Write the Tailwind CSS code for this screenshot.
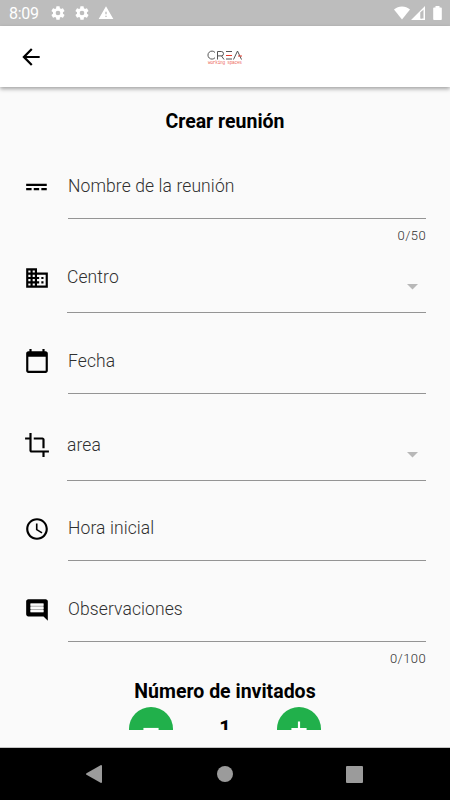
<!DOCTYPE html>
<html lang="es">
<head>
    <meta charset="UTF-8">
    <meta name="viewport" content="width=device-width, initial-scale=1.0">
    <title>Crear reunión</title>
    <script src="https://cdn.jsdelivr.net/npm/@tailwindcss/browser@4"></script>
</head>
<body class="font-[Roboto,sans-serif] bg-[#fafafa]">
    <div class="flex flex-col w-[450px] h-[800px] overflow-hidden">
        <!-- Status bar -->
        <div class="flex items-center shrink-0 h-[26px] pl-[9px] pr-2 bg-[#bdbdbd] text-white">
            <span class="w-[41px] text-[16px] leading-[26px] pt-[2px] tracking-[-0.3px]">8:09</span>
            <svg class="w-4 h-4" viewBox="0 0 24 24" fill="currentColor"><path d="M19.4 13a7.500 7.500 0 0 0 0-2l2.100-1.650a.5.5 0 0 0 .12-.64l-2-3.460a.5.5 0 0 0-.6-.22l-2.500 1a7.300 7.300 0 0 0-1.700-.98l-.38-2.650A.5.5 0 0 0 14 2h-4a.5.5 0 0 0-.5.42l-.38 2.650c-.6.25-1.170.58-1.690.98l-2.490-1a.5.5 0 0 0-.61.22l-2 3.460a.5.5 0 0 0 .12.64L4.570 11a7.500 7.500 0 0 0 0 2l-2.110 1.650a.5.5 0 0 0-.12.64l2 3.460c.12.22.39.3.61.22l2.490-1c.52.4 1.080.73 1.690.98l.38 2.650c.03.24.24.4.49.4h4c.25 0 .46-.18.49-.42l.38-2.650a7.300 7.300 0 0 0 1.690-.98l2.490 1c.23.09.49 0 .61-.22l2-3.460a.5.5 0 0 0-.12-.64zM12 15.500a3.500 3.500 0 1 1 0-7 3.500 3.500 0 0 1 0 7z"/></svg>
            <svg class="w-4 h-4 ml-2" viewBox="0 0 24 24" fill="currentColor"><path d="M19.4 13a7.500 7.500 0 0 0 0-2l2.100-1.650a.5.5 0 0 0 .12-.64l-2-3.460a.5.5 0 0 0-.6-.22l-2.500 1a7.300 7.300 0 0 0-1.700-.98l-.38-2.650A.5.5 0 0 0 14 2h-4a.5.5 0 0 0-.5.42l-.38 2.650c-.6.25-1.170.58-1.690.98l-2.490-1a.5.5 0 0 0-.61.22l-2 3.460a.5.5 0 0 0 .12.64L4.570 11a7.500 7.500 0 0 0 0 2l-2.110 1.650a.5.5 0 0 0-.12.64l2 3.460c.12.22.39.3.61.22l2.490-1c.52.4 1.080.73 1.690.98l.38 2.650c.03.24.24.4.49.4h4c.25 0 .46-.18.49-.42l.38-2.650a7.300 7.300 0 0 0 1.690-.98l2.490 1c.23.09.49 0 .61-.22l2-3.460a.5.5 0 0 0-.12-.64zM12 15.500a3.500 3.500 0 1 1 0-7 3.500 3.500 0 0 1 0 7z"/></svg>
            <svg class="w-4 h-4 ml-2" viewBox="0 0 24 24" fill="currentColor"><path d="M1 21h22L12 2 1 21zm12-3h-2v-2h2v2zm0-4h-2v-4h2v4z"/></svg>
            <svg class="w-[16px] h-[14px] ml-auto" viewBox="0 0 16 14" fill="currentColor"><path d="M8 13.500 0 3.500C2.300 1.600 5 .5 8 .5s5.700 1.100 8 3z"/></svg>
            <svg class="w-[14px] h-[14px] ml-[1px]" viewBox="0 0 14 14" fill="currentColor"><path fill-rule="evenodd" d="M0 14 14 0v14zM9.500 6.500V12.500h3V3.500z"/><path d="M9.500 6.500l1.500-1.500v7.500H9.500z" fill="#bdbdbd"/></svg>
            <svg class="w-[9px] h-[14px] ml-[8px]" viewBox="0 0 9 14" fill="currentColor"><path d="M2.500 0h4v1.500H8q.8 0 .8.8v11q0 .7-.8.7H1q-.8 0-.8-.7v-11q0-.8.8-.8h1.500z"/></svg>
        </div>

        <!-- App bar -->
        <header class="relative z-10 flex items-center shrink-0 h-[61px] bg-white shadow-[0_2px_4px_rgba(0,0,0,0.35)]">
            <svg class="w-[26px] h-[26px] ml-[18px]" viewBox="0 0 24 24"><path d="M20 11H7.830l5.590-5.590L12 4l-8 8 8 8 1.410-1.410L7.830 13H20v-2z"/></svg>
            <svg class="w-9 h-[18px] ml-[163px]" viewBox="0 0 36 18" fill="none" stroke="#555" stroke-width="1">
                <path d="M8 4.500A4 4 0 1 0 8 9.700M10.500 11.500V3.500h3.800a2.200 2.200 0 0 1 0 4.400H10.500M14.500 7.900 17 11.500M19 3.500h6M19 11h6M26.500 11.500 30.500 3l4 8.500"/>
                <path d="M19 7.500h6M31 8h4" stroke="#e53a2c"/>
                <text x="1" y="16.300" textLength="34" font-family="Liberation Mono, monospace" font-size="4.500" fill="#ee6b62" stroke="none">working spaces</text>
            </svg>
        </header>

        <!-- Form, scrolls under the bottom edge -->
        <main class="h-[643px] shrink-0 overflow-hidden pl-6 pr-6">
            <h1 class="h-[78px] pt-[21px] text-center text-[19.500px] leading-[27px] font-bold text-black">Crear reunión</h1>

            <div class="flex h-[91px]">
                <svg class="w-[26px] h-[26px] mt-[9px] mr-[18px]" viewBox="0 0 24 24"><path d="M2 9v2h19V9H2zm0 6h5v-2H2v2zm7 0h5v-2H9v2zm7 0h5v-2h-5v2z"/></svg>
                <div class="flex-1">
                    <div class="h-[54px] border-b border-[#949494] text-[17.500px] leading-[43px] font-light tracking-[0.1px] text-[#303030]">Nombre de la reunión</div>
                    <div class="pt-[8px] text-right text-[13px] leading-[18px] font-light tracking-[0.4px] text-[#303030]">0/50</div>
                </div>
            </div>

            <div class="flex h-[84px]">
                <svg class="w-[26px] h-[26px] mt-[9px] mr-[17px]" viewBox="0 0 24 24"><path d="M12 7V3H2v18h20V7H12zM6 19H4v-2h2v2zm0-4H4v-2h2v2zm0-4H4V9h2v2zm0-4H4V5h2v2zm4 12H8v-2h2v2zm0-4H8v-2h2v2zm0-4H8V9h2v2zm0-4H8V5h2v2zm10 12h-8v-2h2v-2h-2v-2h2v-2h-2V9h8v10zm-2-8h-2v2h2v-2zm0 4h-2v2h2v-2z"/></svg>
                <div class="flex-1 flex justify-between h-[57px] border-b border-[#949494] text-[17.500px] leading-[43px] font-light tracking-[0.1px] text-[#303030]">
                    <span>Centro</span>
                    <svg class="w-[11px] h-[6px] mt-7 mr-[8px]" viewBox="0 0 11 6" fill="#b8b8b8"><path d="M0 0h11L5.500 5.500z"/></svg>
                </div>
            </div>

            <div class="flex h-[84px]">
                <svg class="w-[26px] h-[26px] mt-2 mr-[18px]" viewBox="0 0 24 24"><path d="M20 3h-1V1h-2v2H7V1H5v2H4c-1.100 0-2 .9-2 2v16c0 1.100.9 2 2 2h16c1.100 0 2-.9 2-2V5c0-1.100-.9-2-2-2zm0 18H4V8h16v13z"/></svg>
                <div class="flex-1 h-[54px] border-b border-[#949494] text-[17.500px] leading-[43px] font-light tracking-[0.1px] text-[#303030]">Fecha</div>
            </div>

            <div class="flex h-[83px]">
                <svg class="w-[26px] h-[26px] mt-2 mr-[17px]" viewBox="0 0 24 24"><path d="M17 15h2V7c0-1.100-.9-2-2-2H9v2h8v8zM7 17V1H5v4H1v2h4v10c0 1.100.9 2 2 2h10v4h2v-4h4v-2H7z"/></svg>
                <div class="flex-1 flex justify-between h-[57px] border-b border-[#949494] text-[17.500px] leading-[42px] font-light tracking-[0.1px] text-[#303030]">
                    <span>area</span>
                    <svg class="w-[11px] h-[6px] mt-7 mr-[8px]" viewBox="0 0 11 6" fill="#b8b8b8"><path d="M0 0h11L5.500 5.500z"/></svg>
                </div>
            </div>

            <div class="flex h-[81px]">
                <svg class="w-[26px] h-[26px] mt-[9px] mr-[18px]" viewBox="0 0 24 24"><path d="M11.990 2C6.470 2 2 6.480 2 12s4.470 10 9.990 10C17.520 22 22 17.520 22 12S17.520 2 11.990 2zM12 20c-4.420 0-8-3.580-8-8s3.580-8 8-8 8 3.580 8 8-3.580 8-8 8zm.5-13H11v6l5.250 3.150.75-1.230-4.500-2.670z"/></svg>
                <div class="flex-1 h-[54px] border-b border-[#949494] text-[17.500px] leading-[43px] font-light tracking-[0.1px] text-[#303030]">Hora inicial</div>
            </div>

            <div class="flex h-[90px]">
                <svg class="w-[26px] h-[26px] mt-[9px] mr-[18px]" viewBox="0 0 24 24"><path d="M21.990 4c0-1.100-.89-2-1.990-2H4c-1.100 0-2 .9-2 2v12c0 1.100.9 2 2 2h14l4 4-.01-18zM18 14H6v-2h12v2zm0-3H6V9h12v2zm0-3H6V6h12v2z"/><path d="M6 6h12v8H6z" fill="#fafafa" fill-opacity=".7"/></svg>
                <div class="flex-1">
                    <div class="h-[54px] border-b border-[#949494] text-[17.500px] leading-[43px] font-light tracking-[0.1px] text-[#303030]">Observaciones</div>
                    <div class="pt-[8px] text-right text-[13px] leading-[18px] font-light tracking-[0.4px] text-[#303030]">0/100</div>
                </div>
            </div>

            <h2 class="h-[29px] text-center text-[19.500px] leading-[27px] font-bold text-black">Número de invitados</h2>
            <div class="flex justify-between w-[193px] ml-[104.500px]">
                <button class="flex items-center justify-center w-11 h-11 rounded-full bg-[#21b04b]">
                    <svg class="w-[26px] h-[26px]" viewBox="0 0 24 24" fill="#fff"><path d="M19 13H5v-2h14v2z"/></svg>
                </button>
                <span class="text-[20px] leading-[42px] font-bold text-black">1</span>
                <button class="flex items-center justify-center w-11 h-11 rounded-full bg-[#21b04b]">
                    <svg class="w-[26px] h-[26px]" viewBox="0 0 24 24" fill="#fff"><path d="M19 13h-6v6h-2v-6H5v-2h6V5h2v6h6v2z"/></svg>
                </button>
            </div>
        </main>

        <!-- Navigation bar -->
        <nav class="flex items-center justify-between h-[53px] mt-auto pl-[86px] pr-[87px] bg-black border-t border-[#c4c4c4]">
            <svg class="w-4 h-[18px]" viewBox="0 0 16 18" fill="#9b9b9b"><path d="M15 0q1 0 1 1v16q0 1-1 1L.5 9.800q-1-.8 0-1.600z"/></svg>
            <div class="w-4 h-4 ml-px rounded-full bg-[#9b9b9b]"></div>
            <div class="w-[17px] h-[17px] rounded-[1px] bg-[#9b9b9b]"></div>
        </nav>
    </div>
</body>
</html>
